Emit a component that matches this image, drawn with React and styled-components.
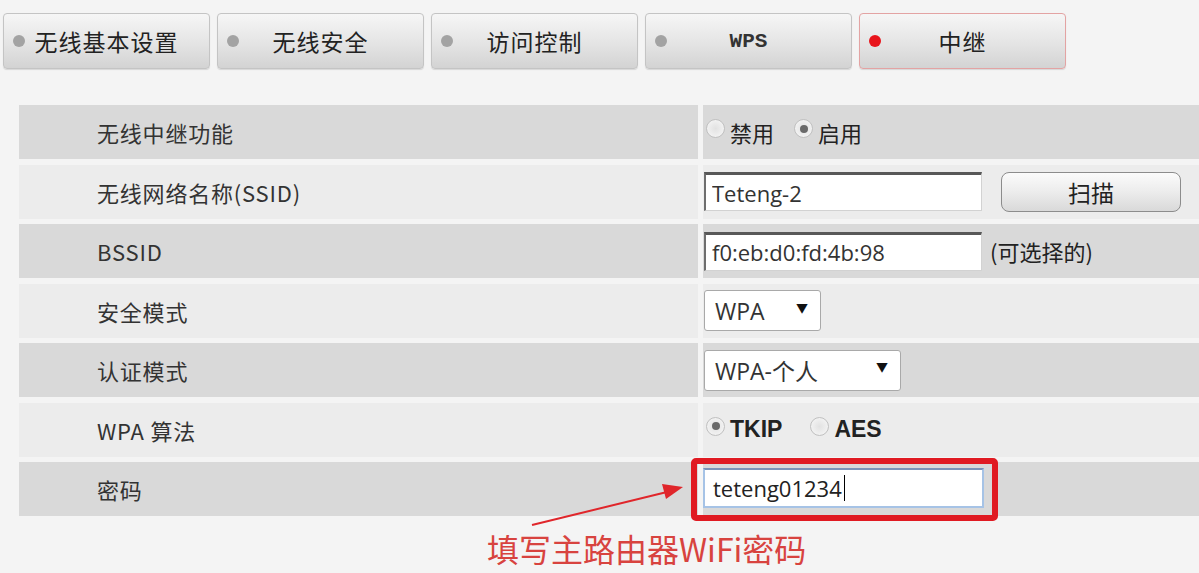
import React from "react";
import styled, { createGlobalStyle, css } from "styled-components";

const CJK = `"Noto Sans CJK SC", "Noto Sans", sans-serif`;
const LATIN = `"Open Sans", "Noto Sans CJK SC", sans-serif`;

const Global = createGlobalStyle`
  html, body {
    margin: 0;
    padding: 0;
    background: #f4f4f4;
  }
  body {
    font-family: ${CJK};
    color: #333;
  }
`;

const Page = styled.div`
  position: relative;
  width: 1199px;
  height: 573px;
  overflow: hidden;
  padding-top: 13px;
  box-sizing: border-box;
`;

const TabBar = styled.div`
  display: flex;
  gap: 7px;
  padding-left: 3px;
`;

const Tab = styled.div`
  width: 207px;
  height: 56px;
  box-sizing: border-box;
  display: flex;
  align-items: center;
  border: 1px solid ${(p) => (p.$active ? "#e3a3a3" : "#c4c4c4")};
  border-radius: 4px;
  background: linear-gradient(#f6f6f6, #e4e4e4 55%, #d3d3d3);
  box-shadow: 0 1px 1px rgba(0, 0, 0, 0.12);
`;

const Dot = styled.span`
  width: 12px;
  height: 12px;
  margin-left: 9px;
  border-radius: 50%;
  flex: none;
  background: ${(p) => (p.$active ? "#e8141b" : "#a3a3a3")};
`;

const TabLabel = styled.span`
  flex: 1;
  margin-right: 21px;
  text-align: center;
  font-size: 23px;
  letter-spacing: 1px;
  color: #222;
  ${(p) =>
    p.$mono &&
    css`
      font-family: "Liberation Mono", monospace;
      font-size: 21px;
      font-weight: bold;
      letter-spacing: 0;
      color: #333;
    `}
`;

const Table = styled.div`
  margin-top: 36px;
  margin-left: 19px;
  display: flex;
  flex-direction: column;
  gap: 5.5px;
`;

const Row = styled.div`
  display: grid;
  grid-template-columns: 679px 1fr;
  grid-template-rows: 54px;
  column-gap: 5px;
  height: 54px;
`;

const Cell = styled.div`
  display: flex;
  align-items: center;
  min-height: 0;
  background: ${(p) => (p.$dark ? "#d9d9d9" : "#ececec")};
`;

const Label = styled(Cell)`
  padding-left: 78px;
  font-size: 22px;
  letter-spacing: 0.8px;
  color: #333;
`;

const Value = styled(Cell)`
  padding-left: 1px;
  gap: 8px;
`;

const RadioGroup = styled.label`
  display: flex;
  align-items: center;
  margin-right: 10px;
  font-size: 22px;
  color: #222;
  ${(p) =>
    p.$bold &&
    css`
      font-family: "Liberation Sans", sans-serif;
      font-weight: bold;
      font-size: 23px;
      margin-right: 18px;
    `}
`;

const Radio = styled.span`
  width: 19px;
  height: 19px;
  box-sizing: border-box;
  margin: -7px 5px 0 2px;
  border-radius: 50%;
  border: 1px solid #c0c0c0;
  background: radial-gradient(circle, #e2e2e2, #f8f8f8);
  display: flex;
  align-items: center;
  justify-content: center;
  &::after {
    content: "";
    width: 8px;
    height: 8px;
    border-radius: 50%;
    background: ${(p) => (p.$checked ? "#6a6a6a" : "transparent")};
  }
`;

const TextInput = styled.input`
  width: 278px;
  height: 39px;
  box-sizing: border-box;
  margin: 0;
  padding: 0 6px;
  border: 1px solid #d2d2d2;
  border-top: 3px solid #585858;
  border-left: 2px solid #6e6e6e;
  background: #fff;
  font-family: ${LATIN};
  font-size: 22px;
  color: #333;
  outline: none;
`;

const ScanButton = styled.button`
  width: 180px;
  height: 40px;
  margin-left: 11px;
  border: 1px solid #8c8c8c;
  border-radius: 8px;
  background: linear-gradient(#fbfbfb, #ececec 50%, #d9d9d9);
  font-family: ${CJK};
  font-size: 23px;
  color: #222;
  padding: 0;
`;

const Hint = styled.span`
  font-size: 22px;
  color: #222;
`;

const Select = styled.div`
  width: ${(p) => p.$width}px;
  height: 41px;
  box-sizing: border-box;
  padding: 0 12px 0 10px;
  display: flex;
  align-items: center;
  justify-content: space-between;
  background: #fff;
  border: 1px solid #a9a9a9;
  border-radius: 3px;
  font-family: ${LATIN};
  font-size: 23px;
  color: #333;
  & > i {
    font-style: normal;
    font-size: 12px;
    color: #111;
    margin-top: -6px;
  }
`;

const Highlight = styled.div`
  margin-left: -13px;
  padding: 4px 8px 7px 6px;
  border: 6px solid #e01a22;
  border-radius: 5px;
  display: flex;
`;

const PasswordField = styled.div`
  width: 281px;
  height: 40px;
  box-sizing: border-box;
  padding: 0 8px;
  display: flex;
  align-items: center;
  background: #fff;
  border: 2px solid #a6c3e6;
  border-top-color: #7b93b8;
  font-family: ${LATIN};
  font-size: 22px;
  color: #222;
`;

const Caret = styled.span`
  width: 1px;
  height: 26px;
  margin-left: 2px;
  background: #000;
`;

const Note = styled.div`
  margin: 13px 0 0 487px;
  font-size: 32px;
  color: #d8433f;
  line-height: 1.2;
`;

const ArrowSvg = styled.svg`
  position: absolute;
  left: 525px;
  top: 480px;
`;

const tabs = ["无线基本设置", "无线安全", "访问控制", "WPS", "中继"];

export default function App() {
  return (
    <Page>
      <Global />
      <TabBar>
        {tabs.map((t, i) => (
          <Tab key={t} $active={i === 4}>
            <Dot $active={i === 4} />
            <TabLabel $mono={t === "WPS"}>{t}</TabLabel>
          </Tab>
        ))}
      </TabBar>

      <Table>
        <Row>
          <Label $dark>无线中继功能</Label>
          <Value $dark>
            <RadioGroup>
              <Radio />
              禁用
            </RadioGroup>
            <RadioGroup>
              <Radio $checked />
              启用
            </RadioGroup>
          </Value>
        </Row>
        <Row>
          <Label>无线网络名称(SSID)</Label>
          <Value>
            <TextInput readOnly defaultValue="Teteng-2" />
            <ScanButton>扫描</ScanButton>
          </Value>
        </Row>
        <Row>
          <Label $dark>BSSID</Label>
          <Value $dark>
            <TextInput readOnly defaultValue="f0:eb:d0:fd:4b:98" />
            <Hint>(可选择的)</Hint>
          </Value>
        </Row>
        <Row>
          <Label>安全模式</Label>
          <Value>
            <Select $width={117}>
              WPA <i>▼</i>
            </Select>
          </Value>
        </Row>
        <Row>
          <Label $dark>认证模式</Label>
          <Value $dark>
            <Select $width={197}>
              WPA-个人 <i>▼</i>
            </Select>
          </Value>
        </Row>
        <Row>
          <Label>WPA 算法</Label>
          <Value>
            <RadioGroup $bold>
              <Radio $checked />
              TKIP
            </RadioGroup>
            <RadioGroup $bold>
              <Radio />
              AES
            </RadioGroup>
          </Value>
        </Row>
        <Row>
          <Label $dark>密码</Label>
          <Value $dark>
            <Highlight>
              <PasswordField>
                teteng01234
                <Caret />
              </PasswordField>
            </Highlight>
          </Value>
        </Row>
      </Table>

      <Note>填写主路由器WiFi密码</Note>

      <ArrowSvg width="165" height="50" viewBox="0 0 165 50">
        <line x1="7" y1="45" x2="142" y2="12" stroke="#e0262b" strokeWidth="2" />
        <polygon points="158,7 141,19 137,4" fill="#e0262b" />
      </ArrowSvg>
    </Page>
  );
}
